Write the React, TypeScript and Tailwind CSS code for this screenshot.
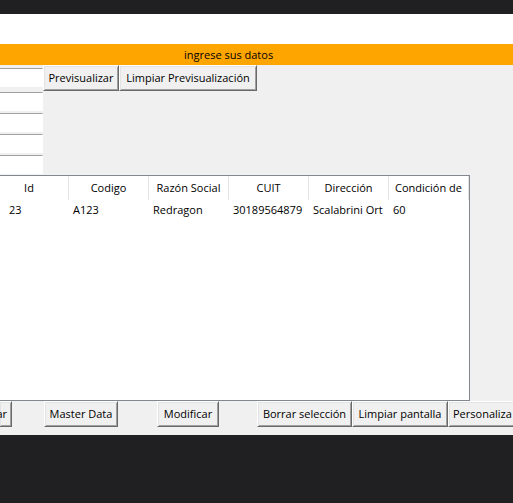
import type { ReactNode } from "react";

const columns = ["Id", "Codigo", "Razón Social", "CUIT", "Dirección", "Condición de"];
const rows = [["23", "A123", "Redragon", "30189564879", "Scalabrini Ort", "60"]];
const fields = ["Codigo", "Razón Social", "CUIT", "Dirección", "Condición"];

function RaisedButton({ children, className = "" }: { children: ReactNode; className?: string }) {
  return (
    <button
      type="button"
      className={`flex h-[26px] shrink-0 items-center justify-center whitespace-nowrap border border-t-white border-r-[#696969] border-b-[#696969] border-l-white bg-[#f0f0f0] shadow-[inset_1px_1px_0_#e3e3e3,inset_-1px_-1px_0_#a0a0a0] ${className}`}
    >
      {children}
    </button>
  );
}

export default function App() {
  return (
    <div className="flex min-h-screen flex-col overflow-hidden bg-[#202022] pt-3.5 font-['Open_Sans','Noto_Sans',sans-serif] text-[11px] leading-4 text-black">
      <main className="bg-[#f0f0f0] pb-2">
        <div className="h-[30px] bg-white" />
        <h1 className="flex h-[21px] items-center bg-[#ffa500] pl-[184px]">ingrese sus datos</h1>

        <form className="flex items-start">
          <div className="w-[43px] shrink-0">
            {fields.map((field, i) => (
              <div key={field} className={i === 0 ? "flex h-[26px] items-start pt-[3px]" : "flex h-[21px] items-start pt-px"}>
                <input
                  aria-label={field}
                  className="h-[19px] w-full border-t border-r border-t-[#a0a0a0] border-r-white bg-white px-1 outline-none"
                />
              </div>
            ))}
          </div>
          <RaisedButton className="w-[76px]">Previsualizar</RaisedButton>
          <RaisedButton className="w-[138px]">Limpiar Previsualización</RaisedButton>
        </form>

        <div className="h-[226px] w-[470px] border-y border-r border-[#828790] bg-white">
          <table className="w-full table-fixed border-separate border-spacing-0">
            <colgroup>
              <col className="w-[69px]" />
              <col span={5} className="w-20" />
            </colgroup>
            <thead>
              <tr>
                {columns.map((column, i) => (
                  <th
                    key={column}
                    scope="col"
                    className={`h-6 overflow-hidden whitespace-nowrap border-r border-[#e5e5e5] p-0 text-center font-normal ${i === 0 ? "pr-2.5" : ""}`}
                  >
                    {column}
                  </th>
                ))}
              </tr>
            </thead>
            <tbody>
              {rows.map((row) => (
                <tr key={row[0]}>
                  {row.map((cell, i) => (
                    <td key={columns[i]} className={`h-5 overflow-hidden whitespace-nowrap p-0 ${i === 0 ? "pl-[9px]" : "pl-1"}`}>
                      {cell}
                    </td>
                  ))}
                </tr>
              ))}
            </tbody>
          </table>
        </div>

        <div className="flex overflow-hidden">
          <RaisedButton className="w-3 justify-end! border-l-0 pr-1">ar</RaisedButton>
          <RaisedButton className="ml-8 w-[74px]">Master Data</RaisedButton>
          <RaisedButton className="ml-[39px] w-[62px]">Modificar</RaisedButton>
          <RaisedButton className="ml-[38px] w-[95px]">Borrar selección</RaisedButton>
          <RaisedButton className="w-24">Limpiar pantalla</RaisedButton>
          <RaisedButton className="w-[74px] justify-start! pl-1">Personaliza</RaisedButton>
        </div>
      </main>
    </div>
  );
}
